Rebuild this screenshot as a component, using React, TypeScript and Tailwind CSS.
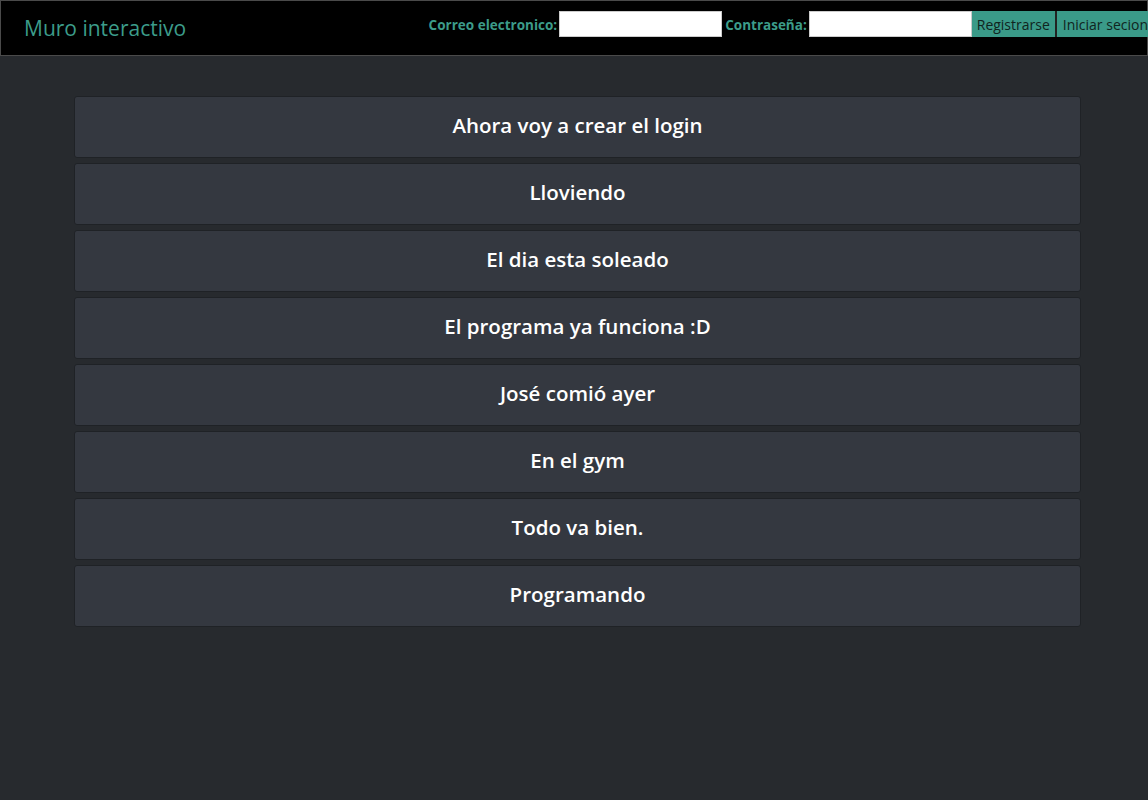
import React from 'react';

const posts = [
  'Ahora voy a crear el login',
  'Lloviendo',
  'El dia esta soleado',
  'El programa ya funciona :D',
  'José comió ayer',
  'En el gym',
  'Todo va bien.',
  'Programando',
];

const App = () => {
  return (
    <div className="min-h-[800px] bg-[#272a2e] font-['Open_Sans',sans-serif]">
      <header className="h-[56px] bg-black border border-[#4a4a4a] flex items-center justify-between">
        <h1 className="pl-[23px] text-[21px] text-[#3c9c8a] pt-[1px]">Muro interactivo</h1>
        <form className="flex items-center pb-[9px] -mr-[1px]" onSubmit={e => e.preventDefault()}>
          <label className="pt-[3px] text-[13.5px] font-bold text-[#3c9c8a] mr-[2px]">Correo electronico:</label>
          <input type="email" className="w-[163px] h-[26px] bg-white border border-[#ccc] mr-[3px]" />
          <label className="pt-[3px] text-[13.5px] font-bold text-[#3c9c8a] mr-[2px]">Contraseña:</label>
          <input type="password" className="w-[163px] h-[26px] bg-white border border-[#ccc]" />
          <button className="h-[26px] px-[5px] pt-[1px] bg-[#3a9a88] text-[#102420] text-[14px] border-r-2 border-[#222]">Registrarse</button>
          <button className="h-[26px] pl-[6px] pt-[1px] bg-[#3a9a88] text-[#102420] text-[14px] whitespace-nowrap">Iniciar secion</button>
        </form>
      </header>
      <main className="pt-[40px] pl-[74px] w-[1081px] flex flex-col gap-[5px]">
        {posts.map(post => (
          <div key={post} className="h-[62px] pb-[3px] bg-[#343840] border border-[#1f2226] rounded-[3px] flex items-center justify-center">
            <span className="text-white text-[20.5px] font-semibold">{post}</span>
          </div>
        ))}
      </main>
    </div>
  );
};

export default App;
